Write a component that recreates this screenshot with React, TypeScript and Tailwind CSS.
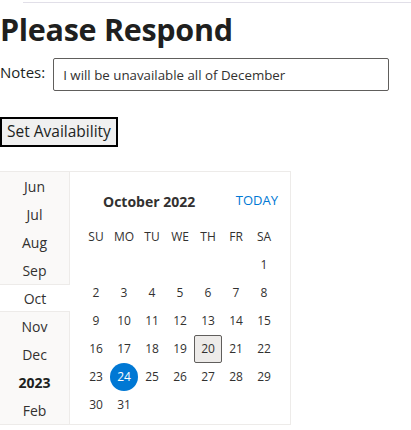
import React from 'react';

const months = ['Jun', 'Jul', 'Aug', 'Sep', 'Oct', 'Nov', 'Dec', '2023', 'Feb'];
const weekDays = ['SU', 'MO', 'TU', 'WE', 'TH', 'FR', 'SA'];

const buildWeeks = (): (number | null)[][] => {
    const cells: (number | null)[] = [null, null, null, null, null, null];
    for (let d = 1; d <= 31; d++) cells.push(d);
    while (cells.length % 7 !== 0) cells.push(null);
    const weeks: (number | null)[][] = [];
    for (let i = 0; i < cells.length; i += 7) weeks.push(cells.slice(i, i + 7));
    return weeks;
};

const MonthColumn: React.FC = () => (
    <div className="w-[70px] flex flex-col">
        {months.map(m => {
            const selected = m === 'Oct';
            const year = m === '2023';
            return (
                <div
                    key={m}
                    className={
                        'h-[28px] flex items-center justify-center text-[14px] ' +
                        (selected
                            ? 'bg-white border-y border-[#edebe9]'
                            : 'bg-[#faf9f8] border-r border-[#edebe9]') +
                        (year ? ' font-bold text-[#201f1e]' : ' text-[#323130]')
                    }
                >
                    {m}
                </div>
            );
        })}
    </div>
);

const DayGrid: React.FC = () => {
    const weeks = buildWeeks();
    return (
        <div className="flex-1 pl-[12px] pt-[15px]">
            <div className="h-[28px] flex items-center justify-between w-[196px]">
                <span className="ml-[21px] text-[14px] font-bold text-[#323130]">October 2022</span>
                <span className="text-[13px] text-[#0078d4]">TODAY</span>
            </div>
            <div className="mt-[8px] grid grid-cols-7 w-[196px]">
                {weekDays.map(w => (
                    <div key={w} className="h-[28px] flex items-center justify-center text-[12px] text-[#323130]">
                        {w}
                    </div>
                ))}
                {weeks.flat().map((d, i) => {
                    if (d === null) return <div key={i} className="h-[28px]" />;
                    const today = d === 24;
                    const marked = d === 20;
                    return (
                        <div key={i} className="h-[28px] flex items-center justify-center">
                            <div
                                className={
                                    'w-[28px] h-[28px] flex items-center justify-center text-[12px] ' +
                                    (today
                                        ? 'rounded-full bg-[#0078d4] text-white'
                                        : marked
                                        ? 'rounded-[2px] border border-[#605e5c] bg-[#edebe9] text-[#323130]'
                                        : 'text-[#323130]')
                                }
                            >
                                {d}
                            </div>
                        </div>
                    );
                })}
            </div>
        </div>
    );
};

export default function App() {
    return (
        <div className="w-[411px] h-[430px] overflow-hidden bg-white font-['Open_Sans',sans-serif] text-[#201f1e]">
            <div className="ml-[23px] mt-[2px] h-px bg-[#e1dfe8]" />
            <h1 className="mt-[6px] text-[30.5px] leading-[40px] font-bold tracking-[-0.3px] text-[#201f1e]">Please Respond</h1>
            <div className="mt-[9px] flex items-start">
                <label className="mt-[3px] text-[15px] text-[#201f1e]">Notes:</label>
                <input
                    className="ml-[8px] w-[336px] h-[33px] border border-[#605e5c] rounded-[2px] px-[9px] text-[13.3px] text-[#323130] outline-none"
                    defaultValue="I will be unavailable all of December"
                />
            </div>
            <button className="mt-[26px] block h-[30px] px-[5px] border-2 border-black bg-[#f0f0f0] text-[15.5px] text-[#201f1e]">
                Set Availability
            </button>
            <div className="mt-[24px] w-[291px] h-[254px] border border-[#edebe9] border-l-0 flex">
                <MonthColumn />
                <DayGrid />
            </div>
        </div>
    );
}
